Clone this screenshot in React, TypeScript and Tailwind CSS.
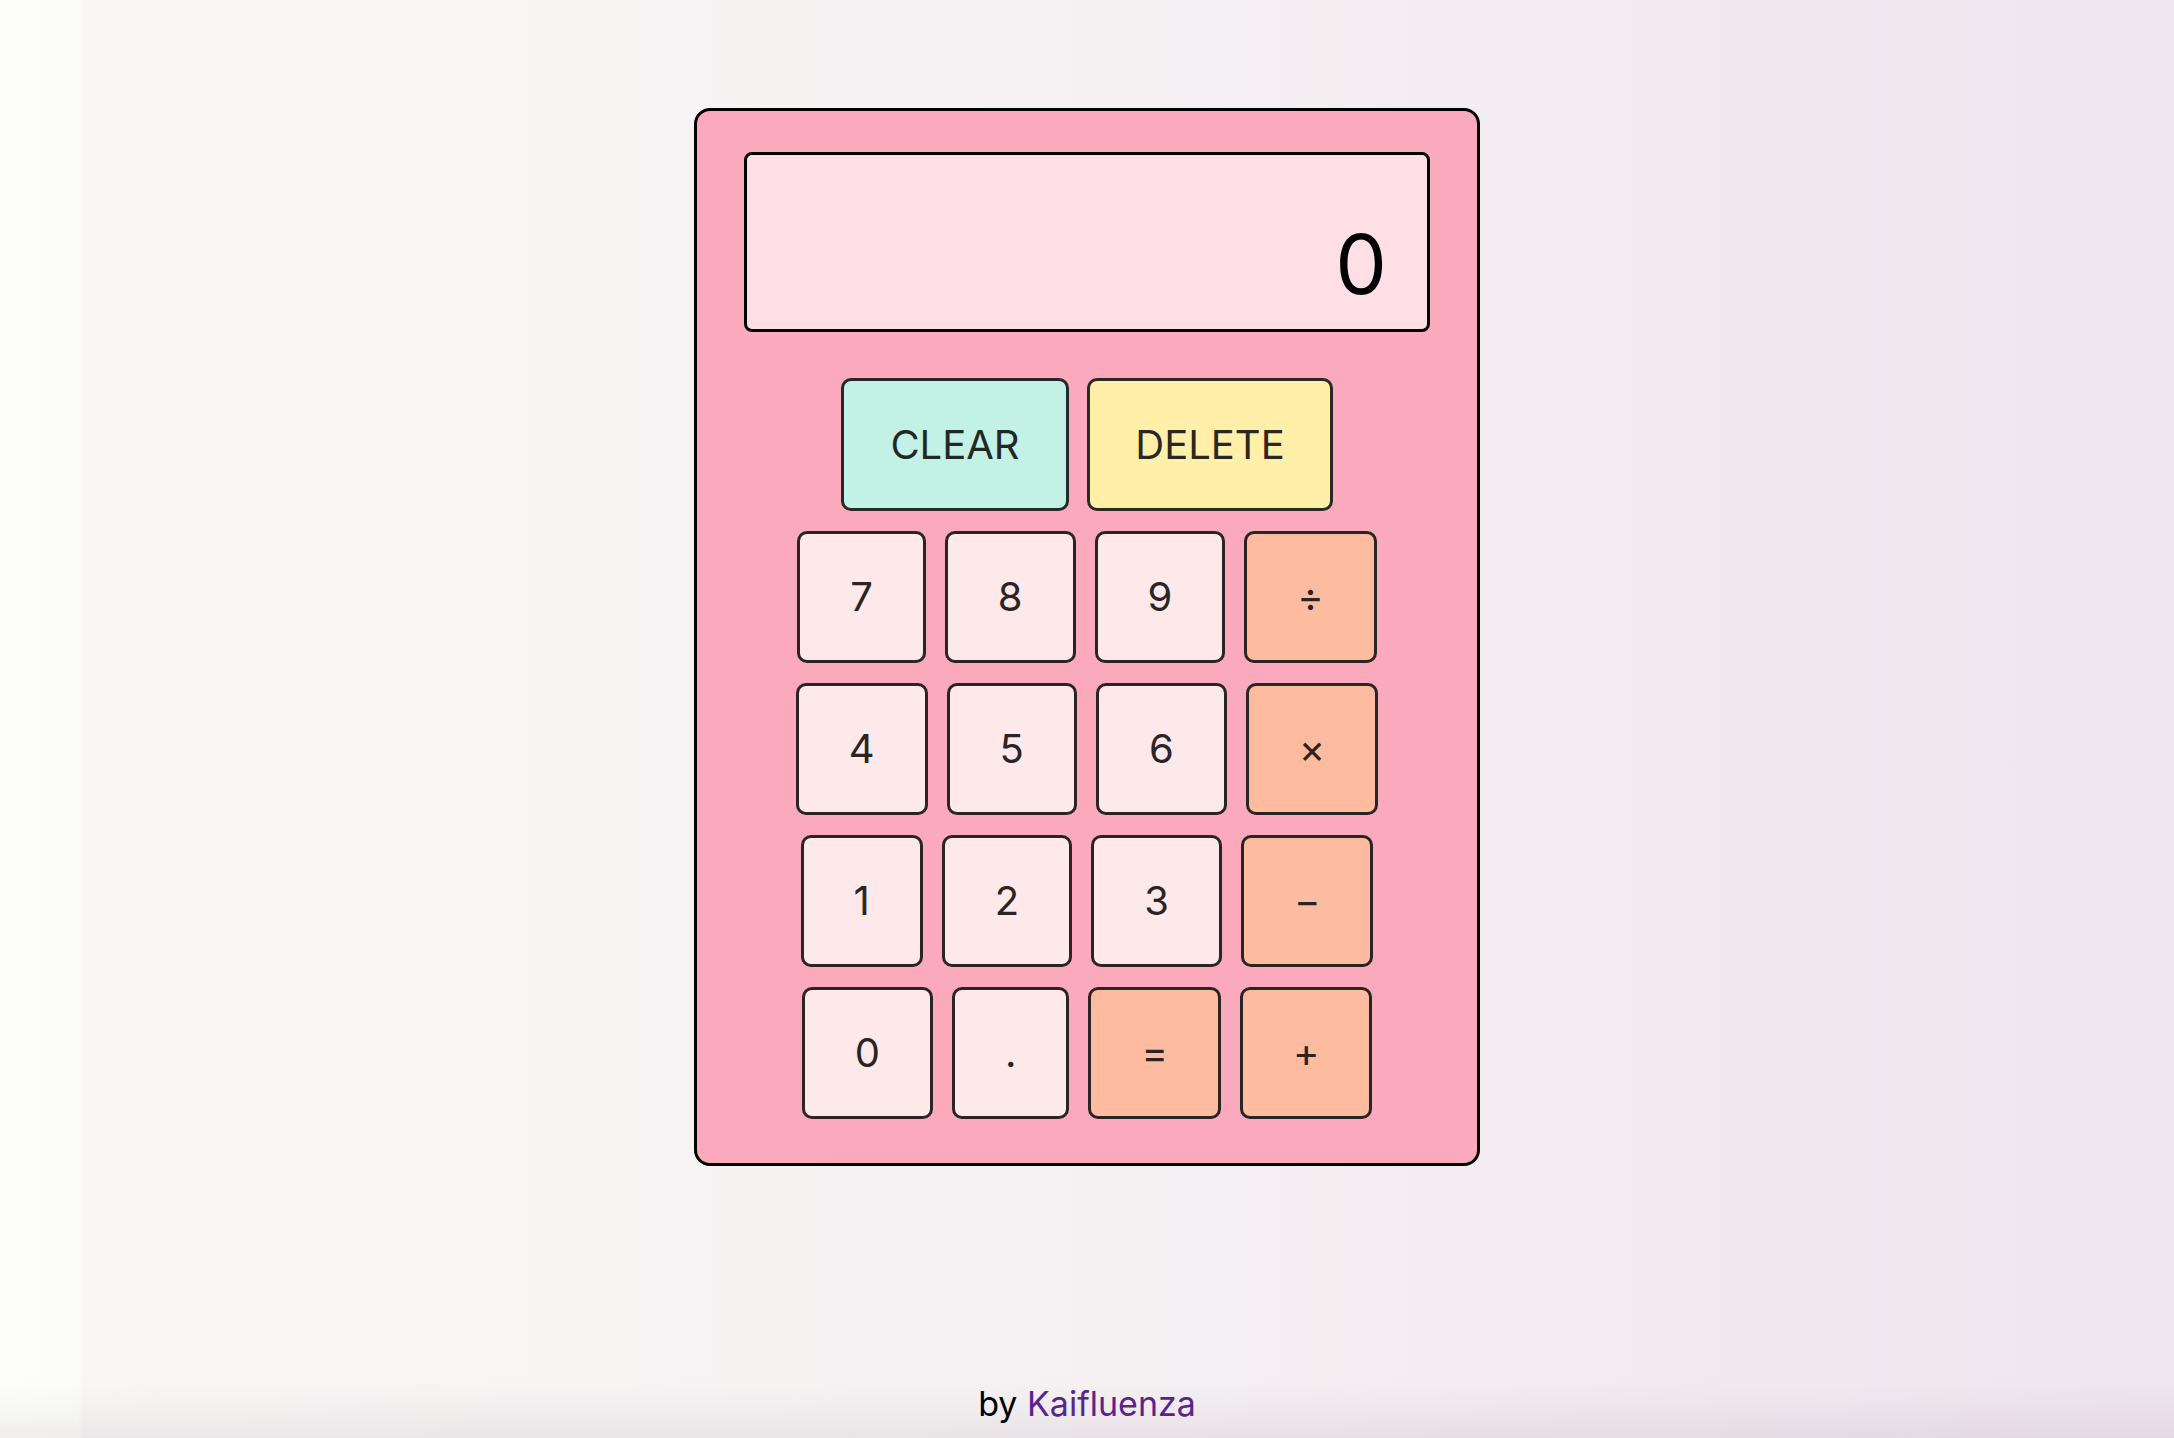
import React from "react";

const rows: { label: string; kind: "num" | "op" }[][] = [
  [
    { label: "7", kind: "num" },
    { label: "8", kind: "num" },
    { label: "9", kind: "num" },
    { label: "÷", kind: "op" },
  ],
  [
    { label: "4", kind: "num" },
    { label: "5", kind: "num" },
    { label: "6", kind: "num" },
    { label: "×", kind: "op" },
  ],
  [
    { label: "1", kind: "num" },
    { label: "2", kind: "num" },
    { label: "3", kind: "num" },
    { label: "−", kind: "op" },
  ],
  [
    { label: "0", kind: "num" },
    { label: ".", kind: "num" },
    { label: "=", kind: "op" },
    { label: "+", kind: "op" },
  ],
];

function Key({ label, kind }: { label: string; kind: "num" | "op" }) {
  return (
    <button
      className={
        "h-[132px] min-w-[116px] px-[50px] rounded-[10px] border-[3px] border-[#2b2424] text-[40px] leading-none text-[#2b2424] flex items-center justify-center " +
        (kind === "num" ? "bg-[#fde8ea]" : "bg-[#fdbb9f]")
      }
    >
      {label}
    </button>
  );
}

export default function App() {
  return (
    <div
      className="relative w-full h-[1438px] flex flex-col items-center bg-[linear-gradient(90deg,#fdfefa_0%,#fcfdf9_3.6%,#f9f7f6_3.8%,#f6f2f3_45%,#f1e8f0_85%,#efe5ef_100%)]"
      style={{ fontFamily: "Inter, 'Noto Sans', sans-serif" }}
    >
      <div className="mt-[108px] w-[786px] h-[1058px] rounded-2xl border-[3px] border-black bg-[#faaabc] pt-[41px] px-[47px] flex flex-col items-center">
        <div className="w-full h-[180px] rounded-[8px] border-[3px] border-black bg-[#ffdfe6] flex items-end justify-end pr-[40px] pb-[23px]">
          <span className="text-[82px] leading-none text-black">0</span>
        </div>

        <div className="mt-[46px] flex gap-[18px]">
          <button className="h-[133px] w-[228px] rounded-[10px] border-[3px] border-[#232a28] bg-[#c4f1e5] text-[40px] leading-none text-[#1f2a27] flex items-center justify-center">
            CLEAR
          </button>
          <button className="h-[133px] w-[246px] rounded-[10px] border-[3px] border-[#2b2a22] bg-[#ffefa8] text-[40px] leading-none text-[#2a2820] flex items-center justify-center">
            DELETE
          </button>
        </div>

        <div className="mt-[20px] flex flex-col gap-[20px]">
          {rows.map((row, i) => (
            <div key={i} className="flex justify-center gap-[19px]">
              {row.map((k) => (
                <Key key={k.label} label={k.label} kind={k.kind} />
              ))}
            </div>
          ))}
        </div>
      </div>

      <footer className="mt-auto w-full h-[58px] flex items-start justify-center pt-[4px] bg-[linear-gradient(to_bottom,rgba(120,100,120,0)_0%,rgba(120,100,120,0.03)_40%,rgba(120,100,120,0.1)_100%)]">
        <p className="text-[34px] leading-[40px] text-black">
          by <span className="text-[#5a2390]">Kaifluenza</span>
        </p>
      </footer>
    </div>
  );
}
